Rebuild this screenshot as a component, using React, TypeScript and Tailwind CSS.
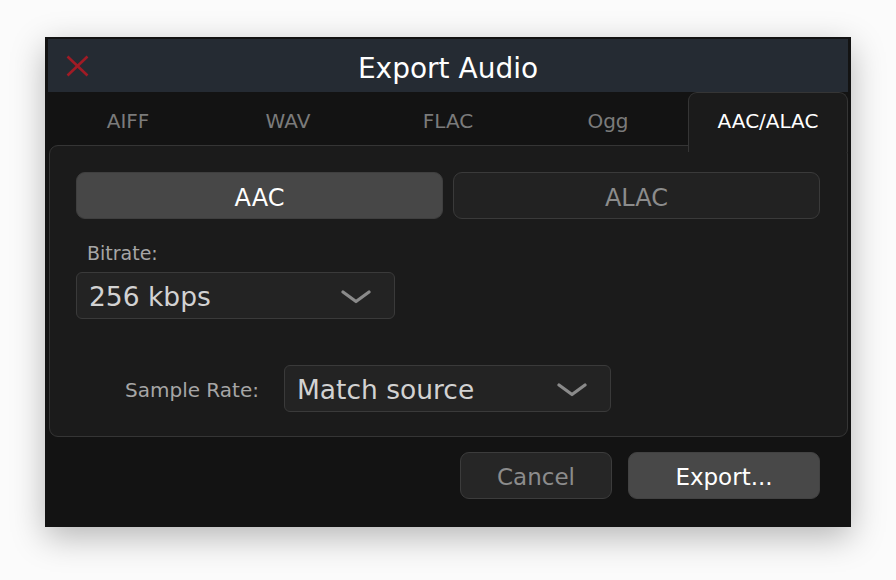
import React from "react";

const font = { fontFamily: '"DejaVu Sans", "Liberation Sans", sans-serif' };

function Chevron() {
  return (
    <svg width="30" height="14" viewBox="0 0 30 14" className="mt-[3px]">
      <polyline points="2,2 15,11.5 28,2" fill="none" stroke="#8a8a8a" strokeWidth="3.2" strokeLinecap="round" strokeLinejoin="round" />
    </svg>
  );
}

function Dropdown({ value, w }: { value: string; w: string }) {
  return (
    <div className={`${w} h-[47px] flex items-center justify-between pl-[12px] pr-[23px] rounded-[6px] border border-[#3a3a3a] bg-[#232323]`}>
      <span className="text-[26.5px] text-[#d2d2d2] leading-none mt-[4px]">{value}</span>
      <Chevron />
    </div>
  );
}

export default function App() {
  const tabs = ["AIFF", "WAV", "FLAC", "Ogg", "AAC/ALAC"];
  return (
    <div style={font} className="w-[896px] h-[580px] bg-[#fbfbfb] pt-[37px] pl-[45px]">
      <div className="w-[806px] h-[490px] bg-[#131313] pt-[2px] px-[3px] shadow-[0_10px_32px_rgba(0,0,0,0.28)] flex flex-col">
        {/* Title bar */}
        <div className="h-[53px] bg-[#252b33] grid grid-cols-[1fr_auto_1fr] items-center">
          <div className="pl-[18px] flex items-center">
            <svg width="23" height="22" viewBox="0 0 23 22">
              <line x1="1.5" y1="1.5" x2="21.5" y2="20.5" stroke="#a01b25" strokeWidth="2.6" />
              <line x1="21.5" y1="1.5" x2="1.5" y2="20.5" stroke="#a01b25" strokeWidth="2.6" />
            </svg>
          </div>
          <div className="text-[28px] text-white leading-none pt-[6px]">Export Audio</div>
          <div />
        </div>
        {/* Tabs */}
        <div className="relative z-10 grid grid-cols-5 h-[60px]">
          {tabs.map((t, i) =>
            i === 4 ? (
              <div key={t} className="flex items-center justify-center pb-[4px] border border-b-0 border-[#353535] rounded-t-[9px] bg-[#1b1b1b] text-[20px] text-white">
                {t}
              </div>
            ) : (
              <div key={t} className="flex items-center justify-center pb-[3px] text-[20px] text-[#7b7b7b]">
                {t}
              </div>
            )
          )}
        </div>
        {/* Panel */}
        <div className="-mt-[7px] ml-px w-[799px] h-[292px] rounded-[9px] border border-[#353535] bg-[#1b1b1b] pt-[26px] pl-[26px] pr-[27px] flex flex-col">
          <div className="flex gap-[10px]">
            <div className="flex-1 h-[47px] pt-[4px] rounded-[9px] bg-[#474747] border border-[#3f3f3f] flex items-center justify-center text-[24px] text-white">
              AAC
            </div>
            <div className="flex-1 h-[47px] pt-[4px] rounded-[9px] bg-[#222222] border border-[#3a3a3a] flex items-center justify-center text-[24px] text-[#8c8c8c]">
              ALAC
            </div>
          </div>
          <div className="mt-[22px] mb-[7px] pl-[11px] h-[24px] leading-[24px] text-[19px] text-[#a6a6a6]">Bitrate:</div>
          <Dropdown value="256 kbps" w="w-[319px]" />
          <div className="mt-[46px] flex items-center">
            <span className="ml-[49px] mr-[25px] mt-[3px] text-[20px] text-[#a6a6a6] leading-none">Sample Rate:</span>
            <Dropdown value="Match source" w="w-[327px]" />
          </div>
        </div>
        {/* Bottom buttons */}
        <div className="mt-[15px] flex justify-end gap-[16px] pr-[28px]">
          <div className="w-[152px] h-[47px] pt-[4px] rounded-[9px] bg-[#262626] border border-[#3c3c3c] flex items-center justify-center text-[23px] text-[#8c8c8c]">
            Cancel
          </div>
          <div className="w-[192px] h-[47px] pt-[4px] rounded-[9px] bg-[#484848] border border-[#424242] flex items-center justify-center text-[23px] text-white">
            Export...
          </div>
        </div>
      </div>
    </div>
  );
}
